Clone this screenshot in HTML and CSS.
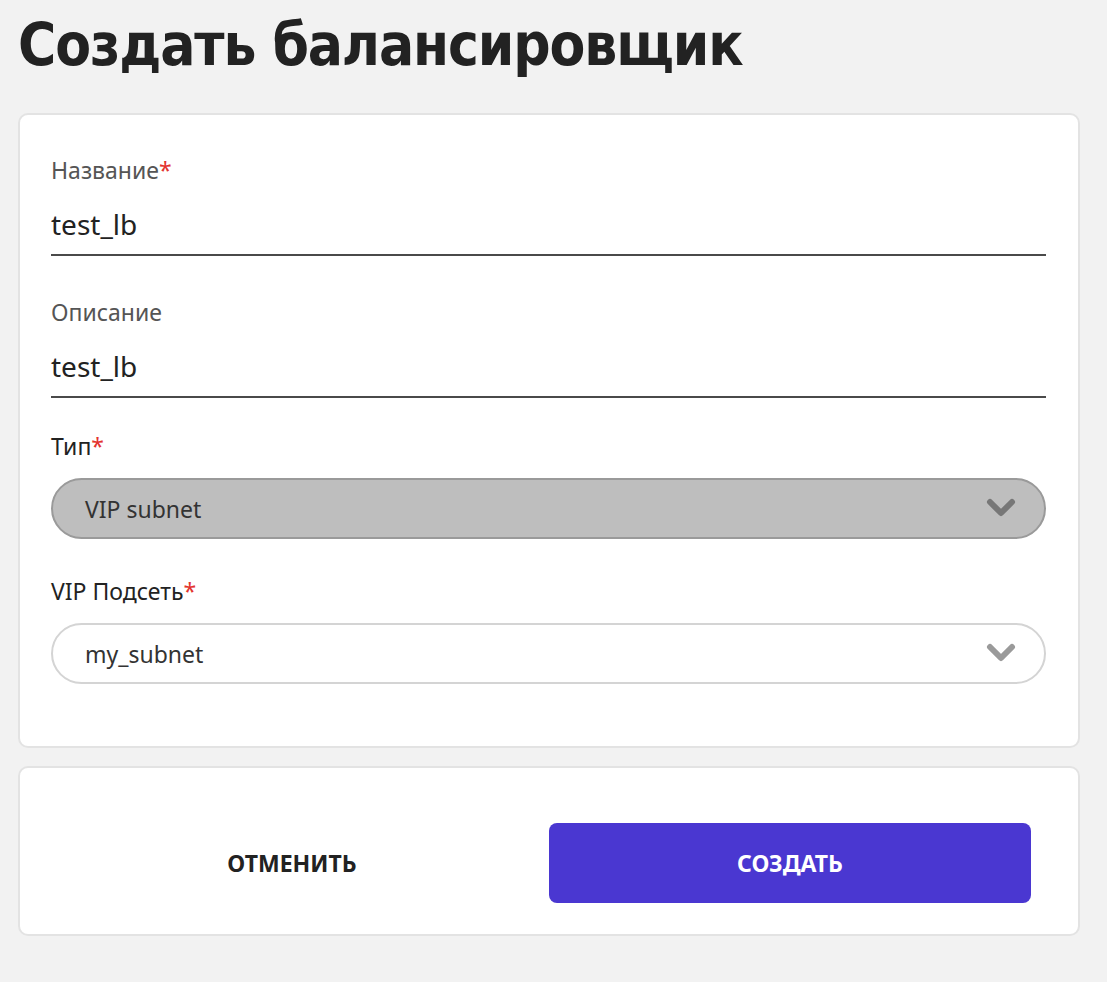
FILE: index.html
```html
<!DOCTYPE html>
<html lang="ru">
<head>
<meta charset="utf-8">
<title>Создать балансировщик</title>
<link rel="stylesheet" href="styles.css">
</head>
<body>
<main class="page">
  <h1 class="title">Создать балансировщик</h1>
  <section class="card form-card">
    <div class="field">
      <label class="label">Название<span class="req">*</span></label>
      <div class="text-input">test_lb</div>
    </div>
    <div class="field">
      <label class="label">Описание</label>
      <div class="text-input">test_lb</div>
    </div>
    <div class="field field-select">
      <label class="label label-dark">Тип<span class="req">*</span></label>
      <div class="select select-disabled">
        <span class="select-value">VIP subnet</span>
        <svg class="chevron" width="30" height="22" viewBox="0 0 30 22"><path d="M4 5 L15 16 L26 5" fill="none" stroke="currentColor" stroke-width="6" stroke-linecap="round" stroke-linejoin="round"/></svg>
      </div>
    </div>
    <div class="field field-select">
      <label class="label label-dark">VIP Подсеть<span class="req">*</span></label>
      <div class="select">
        <span class="select-value">my_subnet</span>
        <svg class="chevron" width="30" height="22" viewBox="0 0 30 22"><path d="M4 5 L15 16 L26 5" fill="none" stroke="currentColor" stroke-width="6" stroke-linecap="round" stroke-linejoin="round"/></svg>
      </div>
    </div>
  </section>
  <section class="card actions-card">
    <button class="btn btn-cancel">ОТМЕНИТЬ</button>
    <button class="btn btn-primary">СОЗДАТЬ</button>
  </section>
</main>
</body>
</html>
```
FILE: styles.css
```css
* { box-sizing: border-box; }
html, body { margin: 0; padding: 0; }
body {
  background: #f2f2f2;
  font-family: "Noto Sans", "Open Sans", sans-serif;
  color: #222;
  width: 1107px;
  height: 982px;
  overflow: hidden;
}
.page {
  padding: 0 27px 0 18px;
}
.title {
  margin: 0;
  padding-top: 7px;
  height: 113px;
  font-family: "DejaVu Sans Condensed", "DejaVu Sans", sans-serif;
  font-weight: bold;
  font-size: 58px;
  line-height: 76px;
  letter-spacing: -1.1px;
  color: #222;
}
.card {
  background: #fff;
  border: 2px solid #e3e3e3;
  border-radius: 10px;
}
.form-card {
  padding: 41px 32px 62px 31px;
}
.field {
  display: flex;
  flex-direction: column;
}
.field + .field { margin-top: 42px; }
.field + .field-select { margin-top: 34px; }
.field-select + .field-select { margin-top: 38px; }
.label {
  font-size: 23px;
  line-height: 28px;
  color: #555;
}
.label-dark { color: #222; }
.req { color: #e3342f; }
.text-input {
  margin-top: 20px;
  height: 52px;
  padding-bottom: 10px;
  font-size: 28px;
  line-height: 40px;
  color: #222;
  border-bottom: 2px solid #4a4a4a;
}
.select {
  margin-top: 18px;
  height: 61px;
  border: 2px solid #d4d4d4;
  border-radius: 31px;
  background: #fff;
  display: flex;
  align-items: center;
  justify-content: space-between;
  padding: 0 28px 0 32px;
  color: #9a9a9a;
}
.select-disabled {
  background: #bebebe;
  border-color: #9a9a9a;
  color: #777;
}
.select-value {
  font-size: 23px;
  color: #333;
}
.chevron { display: block; margin-top: -2px; }
.actions-card {
  margin-top: 18px;
  padding: 55px 47px 31px 31px;
  display: grid;
  grid-template-columns: 1fr 1fr;
  column-gap: 16px;
}
.btn {
  height: 80px;
  border: none;
  border-radius: 8px;
  font-family: "Noto Sans", "Open Sans", sans-serif;
  font-weight: bold;
  font-size: 23px;
  background: transparent;
  color: #222;
  cursor: pointer;
}
.btn-primary {
  background: #4a37d1;
  color: #fff;
}
```
